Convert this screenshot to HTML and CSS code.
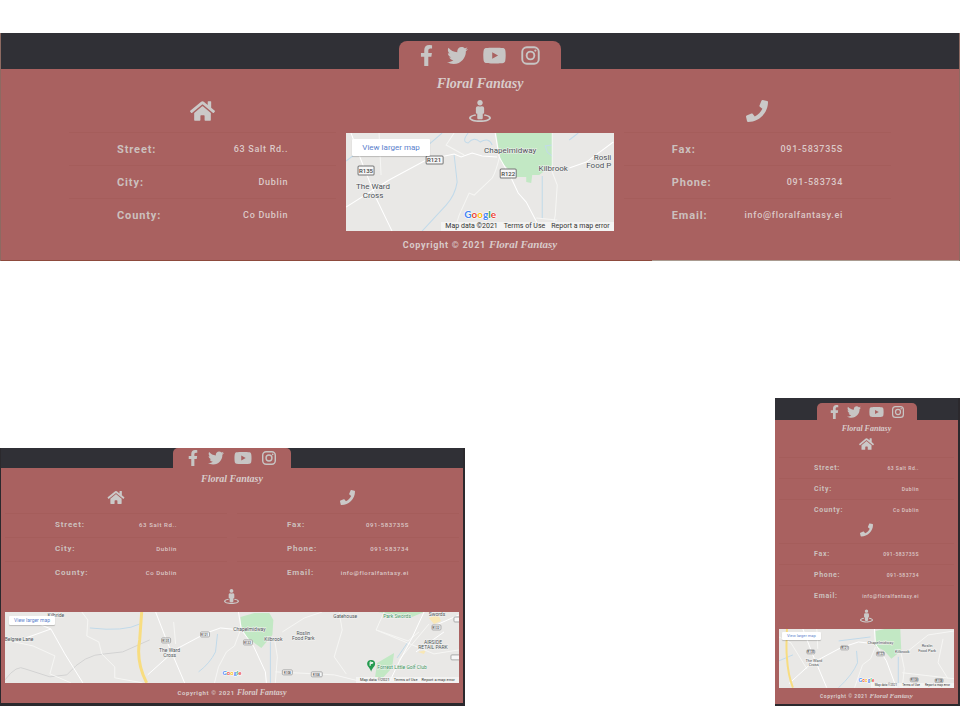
FILE: index.html
```html
<!DOCTYPE html>
<html lang="en">
<head>
<meta charset="utf-8">
<meta name="viewport" content="width=device-width, initial-scale=1">
<title>Floral Fantasy</title>
<link rel="stylesheet" href="styles.css">
</head>
<body>
<svg class="sprite" aria-hidden="true">
  <symbol id="facebook" viewBox="0 0 320 512"><path d="M279.14 288l14.22-92.66h-88.91v-60.13c0-25.35 12.42-50.06 52.24-50.06h40.42V6.26S260.43 0 225.36 0c-73.22 0-121.08 44.38-121.08 124.72v70.62H22.89V288h81.39v224h100.17V288z"/></symbol>
  <symbol id="twitter" viewBox="0 0 512 512"><path d="M459.37 151.716c.325 4.548.325 9.097.325 13.645 0 138.72-105.583 298.558-298.558 298.558-59.452 0-114.68-17.219-161.137-47.106 8.447.974 16.568 1.299 25.34 1.299 49.055 0 94.213-16.568 130.274-44.832-46.132-.975-84.792-31.188-98.112-72.772 6.498.974 12.995 1.624 19.818 1.624 9.421 0 18.843-1.3 27.614-3.573-48.081-9.747-84.143-51.98-84.143-102.985v-1.299c13.969 7.797 30.214 12.67 47.431 13.319-28.264-18.843-46.781-51.005-46.781-87.391 0-19.492 5.197-37.36 14.294-52.954 51.655 63.675 129.3 105.258 216.365 109.807-1.624-7.797-2.599-15.918-2.599-24.04 0-57.828 46.782-104.934 104.934-104.934 30.213 0 57.502 12.67 76.67 33.137 23.715-4.548 46.456-13.32 66.599-25.34-7.798 24.366-24.366 44.833-46.132 57.827 21.117-2.273 41.584-8.122 60.426-16.243-14.292 20.791-32.161 39.308-52.628 54.253z"/></symbol>
  <symbol id="youtube" viewBox="0 0 576 512"><path d="M549.655 124.083c-6.281-23.65-24.787-42.276-48.284-48.597C458.781 64 288 64 288 64S117.22 64 74.629 75.486c-23.497 6.322-42.003 24.947-48.284 48.597-11.412 42.867-11.412 132.305-11.412 132.305s0 89.438 11.412 132.305c6.281 23.65 24.787 41.5 48.284 47.821C117.22 448 288 448 288 448s170.78 0 213.371-11.486c23.497-6.321 42.003-24.171 48.284-47.821 11.412-42.867 11.412-132.305 11.412-132.305s0-89.438-11.412-132.305zm-317.51 213.508V175.185l142.739 81.205-142.739 81.201z"/></symbol>
  <symbol id="instagram" viewBox="0 0 448 512"><rect x="23" y="55" width="402" height="402" rx="110" fill="none" stroke="currentColor" stroke-width="46"/><circle cx="224" cy="256" r="94" fill="none" stroke="currentColor" stroke-width="46"/><circle cx="343" cy="137" r="27"/></symbol>
  <symbol id="home" viewBox="0 0 576 512"><path d="M280.37 148.26L96 300.11V464a16 16 0 0 0 16 16l112.06-.29a16 16 0 0 0 15.92-16V368a16 16 0 0 1 16-16h64a16 16 0 0 1 16 16v95.64a16 16 0 0 0 16 16.05L464 480a16 16 0 0 0 16-16V300L295.67 148.26a12.19 12.19 0 0 0-15.3 0zM571.6 251.47L488 182.56V44.05a12 12 0 0 0-12-12h-56a12 12 0 0 0-12 12v72.61L318.47 43a48 48 0 0 0-61 0L4.34 251.47a12 12 0 0 0-1.6 16.9l25.5 31A12 12 0 0 0 45.15 301l235.22-193.74a12.19 12.19 0 0 1 15.3 0L530.9 301a12 12 0 0 0 16.9-1.6l25.5-31a12 12 0 0 0-1.7-16.93z"/></symbol>
  <symbol id="phone" viewBox="0 0 512 512"><path d="M493.4 24.6l-104-24c-11.3-2.6-22.9 3.3-27.5 13.9l-48 112c-4.2 9.8-1.4 21.3 6.9 28l60.6 49.6c-36 76.7-98.9 140.5-177.2 177.2l-49.6-60.6c-6.8-8.3-18.2-11.1-28-6.9l-112 48C3.9 366.5-2 378.1.6 389.4l24 104C27.1 504.2 36.7 512 48 512c256.1 0 464-207.5 464-464 0-11.2-7.7-20.9-18.6-23.4z"/></symbol>
  <symbol id="street-view" viewBox="0 0 512 512"><path d="M367.9 329.76c-4.62 5.3-9.78 10.1-15.9 13.65v22.94c66.52 9.34 112 28.05 112 49.65 0 30.93-93.12 56-208 56S48 446.93 48 416c0-21.6 45.48-40.3 112-49.65v-22.94c-6.12-3.55-11.28-8.35-15.9-13.65C58.87 345.34 0 378.05 0 416c0 53.02 114.62 96 256 96s256-42.98 256-96c0-37.95-58.87-70.66-144.1-86.24zM256 128c35.35 0 64-28.65 64-64S291.35 0 256 0s-64 28.65-64 64 28.65 64 64 64zm-64 192v96c0 17.67 14.33 32 32 32h64c17.67 0 32-14.33 32-32v-96c17.67 0 32-14.33 32-32v-96c0-26.51-21.49-48-48-48h-11.8c-11.07 5.03-23.26 8-36.2 8s-25.13-2.97-36.2-8H208c-26.51 0-48 21.49-48 48v96c0 17.67 14.33 32 32 32z"/></symbol>
</svg>

<footer class="footer footer-wide">
  <div class="bar">
    <nav class="social" aria-label="Social media">
      <a href="#" aria-label="Facebook"><svg class="narrow"><use href="#facebook"/></svg></a>
      <a href="#" aria-label="Twitter"><svg><use href="#twitter"/></svg></a>
      <a href="#" aria-label="YouTube"><svg class="broad"><use href="#youtube"/></svg></a>
      <a href="#" aria-label="Instagram"><svg class="square"><use href="#instagram"/></svg></a>
    </nav>
  </div>
  <p class="brand script">Floral Fantasy</p>
  <div class="columns">
    <section class="address">
      <svg class="icon home"><use href="#home"/></svg>
      <table>
        <tr><th scope="row">Street:</th><td>63 Salt Rd..</td></tr>
        <tr><th scope="row">City:</th><td>Dublin</td></tr>
        <tr><th scope="row">County:</th><td>Co Dublin</td></tr>
      </table>
    </section>
    <section class="location">
      <svg class="icon"><use href="#street-view"/></svg>
      <div class="map">
        <svg class="map-art" viewBox="0 0 267 98">
          <path class="park" d="M150 0H206V32L193 42H186L185 50L180 49V44L170 44L155 29L153 19Z"/>
          <path class="water" d="M122 0Q115 9 122 10Q128 3 134 9Q143 4 146 12M108 22L111 49Q109 62 100 72L76 98M0 28L8 22M82 12L96 0M206 12L199 13L201 19L206 23M196 43V86M223 7L232 0"/>
          <path class="lane" d="M33 0L35 42M108 0L100 12L118 22M153 25Q150 38 146 45L128 62L123 60L113 82L108 98M206 39L211 52L209 82L206 98M190 85L211 87M206 0V39"/>
          <path class="road" d="M0 74L43 47L80 27L108 21L115 24L126 20L136 23L151 24M149 0L153 24L165 45L172 60L180 69L192 92M5 0L15 27L30 65L46 98M223 35L240 29L267 9"/>
          <g class="shield"><rect x="80" y="23" width="17" height="8" rx="1"/><rect x="12" y="33" width="16" height="9" rx="1"/><rect x="154" y="36" width="16" height="9" rx="1"/></g>
          <g class="shield-text"><text x="88" y="29">R121</text><text x="20" y="40">R135</text><text x="162" y="43">R122</text></g>
          <g class="place"><text x="164" y="20">Chapelmidway</text><text x="207" y="38">Kilbrook</text><text x="27" y="56">The Ward</text><text x="27" y="65">Cross</text></g>
          <g class="place place-edge"><text x="265" y="27">Rosli</text><text x="265" y="35">Food P</text></g>
          <text class="logo" x="118" y="85"><tspan class="g-blue">G</tspan><tspan class="g-red">o</tspan><tspan class="g-yellow">o</tspan><tspan class="g-blue">g</tspan><tspan class="g-green">l</tspan><tspan class="g-red">e</tspan></text>
        </svg>
        <a class="larger" href="#">View larger map</a>
        <div class="legal"><span>Map data ©2021</span><a href="#">Terms of Use</a><a href="#">Report a map error</a></div>
      </div>
    </section>
    <section class="contact">
      <svg class="icon"><use href="#phone"/></svg>
      <table>
        <tr><th scope="row">Fax:</th><td>091-583735S</td></tr>
        <tr><th scope="row">Phone:</th><td>091-583734</td></tr>
        <tr><th scope="row">Email:</th><td>info@floralfantasy.ei</td></tr>
      </table>
    </section>
  </div>
  <p class="copyright">Copyright © 2021 <span class="script">Floral Fantasy</span></p>
</footer>

<div class="previews">
  <footer class="footer footer-tablet">
    <div class="bar">
      <nav class="social" aria-label="Social media">
        <a href="#" aria-label="Facebook"><svg class="narrow"><use href="#facebook"/></svg></a>
        <a href="#" aria-label="Twitter"><svg><use href="#twitter"/></svg></a>
        <a href="#" aria-label="YouTube"><svg class="broad"><use href="#youtube"/></svg></a>
        <a href="#" aria-label="Instagram"><svg class="square"><use href="#instagram"/></svg></a>
      </nav>
    </div>
    <p class="brand script">Floral Fantasy</p>
    <div class="columns">
      <section class="address">
        <svg class="icon home"><use href="#home"/></svg>
        <table>
          <tr><th scope="row">Street:</th><td>63 Salt Rd..</td></tr>
          <tr><th scope="row">City:</th><td>Dublin</td></tr>
          <tr><th scope="row">County:</th><td>Co Dublin</td></tr>
        </table>
      </section>
      <section class="contact">
        <svg class="icon"><use href="#phone"/></svg>
        <table>
          <tr><th scope="row">Fax:</th><td>091-583735S</td></tr>
          <tr><th scope="row">Phone:</th><td>091-583734</td></tr>
          <tr><th scope="row">Email:</th><td>info@floralfantasy.ei</td></tr>
        </table>
      </section>
      <section class="location">
        <svg class="icon"><use href="#street-view"/></svg>
        <div class="map">
          <svg class="map-art" viewBox="0 0 455 71">
            <path class="park" d="M236 5L250 1H265L269 8L268 23L257 36L243 26L237 15ZM373 51L390 41L388 56L378 67L371 65ZM374 0H420L408 5L390 3Z"/>
            <path class="town" d="M425 6L434 2L437 9L430 12ZM414 40L422 38L420 42Z"/>
            <path class="boundary" d="M0 68Q12 52 20 57L45 65L62 63Q80 42 100 42L118 40L145 28"/>
            <path class="water" d="M85 16Q120 20 135 12M213 22L211 40Q205 52 194 60M266 28V71M393 46L404 30"/>
            <path class="lane" d="M77 0L83 8L82 24L94 30L97 42L110 55V66L138 71M0 28L28 34L50 44L45 62L66 71M169 10L171 32M236 18L230 34L222 40L214 55L210 71M270 26L273 45L271 71M271 60L330 63L362 71M278 20L300 6L318 0M335 0L338 18L330 45L342 62M372 18L404 29L415 20M380 0L372 18L430 42L455 38M395 48L425 12"/>
            <path class="road" d="M24 8L46 17L60 42L78 71M46 17L21 26M143 63L172 37L202 21L216 16L236 18M151 0L163 31L180 71M234 0L237 18L249 34L261 60L262 71M420 0L408 26L395 50L385 71M430 14L455 3M412 40L440 20"/>
            <path class="highway" d="M137 0L135 28Q131 50 142 71"/>
            <g class="shield"><rect x="157" y="26" width="9" height="5" rx="1"/><rect x="196" y="20" width="9" height="5" rx="1"/><rect x="239" y="28" width="9" height="5" rx="1"/><rect x="278" y="58" width="10" height="5" rx="1"/><rect x="307" y="60" width="11" height="5" rx="1"/><rect x="428" y="13" width="9" height="5" rx="1"/><rect x="450" y="5" width="9" height="5" rx="1"/><rect x="447" y="43" width="9" height="5" rx="1"/></g>
            <g class="shield-text"><text x="161" y="30">R135</text><text x="200" y="24">R121</text><text x="243" y="32">R122</text><text x="283" y="62">R108</text><text x="312" y="64">R108</text><text x="432" y="17">R132</text></g>
            <g class="place"><text x="51" y="5">Kilbride</text><text x="14" y="29">Belgree Lane</text><text x="165" y="40">The Ward</text><text x="165" y="45">Cross</text><text x="245" y="19">Chapelmidway</text><text x="269" y="29">Kilbrook</text><text x="299" y="23">Roslin</text><text x="299" y="28">Food Park</text><text x="341" y="6">Gatehouse</text><text x="433" y="4">Swords</text><text x="429" y="32">AIRSIDE</text><text x="429" y="37">RETAIL PARK</text></g>
            <g class="place leisure"><text x="393" y="6">Park Swords</text><text x="398" y="57">Forrest Little Golf Club</text></g>
            <path class="pin" d="M367 60C366 56 363 55 363 52A4 4 0 0 1 371 52C371 55 368 56 367 60Z"/>
            <path class="pin-mark" d="M366 54V50L369 51L366 52"/>
            <text class="logo" x="218" y="63"><tspan class="g-blue">G</tspan><tspan class="g-red">o</tspan><tspan class="g-yellow">o</tspan><tspan class="g-blue">g</tspan><tspan class="g-green">l</tspan><tspan class="g-red">e</tspan></text>
          </svg>
          <a class="larger" href="#">View larger map</a>
          <div class="legal"><span>Map data ©2021</span><a href="#">Terms of Use</a><a href="#">Report a map error</a></div>
        </div>
      </section>
    </div>
    <p class="copyright">Copyright © 2021 <span class="script">Floral Fantasy</span></p>
  </footer>

  <footer class="footer footer-phone">
    <div class="bar">
      <nav class="social" aria-label="Social media">
        <a href="#" aria-label="Facebook"><svg class="narrow"><use href="#facebook"/></svg></a>
        <a href="#" aria-label="Twitter"><svg><use href="#twitter"/></svg></a>
        <a href="#" aria-label="YouTube"><svg class="broad"><use href="#youtube"/></svg></a>
        <a href="#" aria-label="Instagram"><svg class="square"><use href="#instagram"/></svg></a>
      </nav>
    </div>
    <p class="brand script">Floral Fantasy</p>
    <div class="columns">
      <section class="address">
        <svg class="icon home"><use href="#home"/></svg>
        <table>
          <tr><th scope="row">Street:</th><td>63 Salt Rd..</td></tr>
          <tr><th scope="row">City:</th><td>Dublin</td></tr>
          <tr><th scope="row">County:</th><td>Co Dublin</td></tr>
        </table>
      </section>
      <section class="contact">
        <svg class="icon"><use href="#phone"/></svg>
        <table>
          <tr><th scope="row">Fax:</th><td>091-583735S</td></tr>
          <tr><th scope="row">Phone:</th><td>091-583734</td></tr>
          <tr><th scope="row">Email:</th><td>info@floralfantasy.ei</td></tr>
        </table>
      </section>
      <section class="location">
        <svg class="icon"><use href="#street-view"/></svg>
        <div class="map">
          <svg class="map-art" viewBox="0 0 176 59">
            <path class="park" d="M97 2L106 0H122L123 22L113 30L106 22L97 17Z"/>
            <path class="water" d="M0 32L14 26M78 22L79 34Q74 46 60 59M60 12L92 8M120 28V59"/>
            <path class="lane" d="M38 0L39 20M97 18L92 30L84 36L76 59M123 25L126 40L124 59M0 8L12 14L28 40M124 44L176 50M130 22L150 6L176 2M165 10L160 34L170 50"/>
            <path class="road" d="M10 55L32 35L62 19L80 13L97 15M24 0L34 26L48 59M96 0L97 15L108 32L118 59"/>
            <path class="highway" d="M8 0Q7 20 8 29Q9 46 14 59"/>
            <g class="shield"><rect x="28" y="21" width="8" height="4" rx="1"/><rect x="62" y="17" width="8" height="4" rx="1"/><rect x="98" y="23" width="8" height="4" rx="1"/><rect x="132" y="49" width="8" height="4" rx="1"/><rect x="157" y="50" width="8" height="4" rx="1"/></g>
            <g class="shield-text"><text x="32" y="24">R135</text><text x="66" y="20">R121</text><text x="102" y="26">R122</text><text x="136" y="52">R108</text><text x="161" y="53">R108</text></g>
            <g class="place"><text x="102" y="15">Chapelmidway</text><text x="124" y="24">Kilbrook</text><text x="35" y="33">The Ward</text><text x="35" y="37">Cross</text><text x="149" y="18">Roslin</text><text x="149" y="23">Food Park</text></g>
            <text class="logo" x="80" y="53"><tspan class="g-blue">G</tspan><tspan class="g-red">o</tspan><tspan class="g-yellow">o</tspan><tspan class="g-blue">g</tspan><tspan class="g-green">l</tspan><tspan class="g-red">e</tspan></text>
          </svg>
          <a class="larger" href="#">View larger map</a>
          <div class="legal"><span>Map data ©2021</span><a href="#">Terms of Use</a><a href="#">Report a map error</a></div>
        </div>
      </section>
    </div>
    <p class="copyright">Copyright © 2021 <span class="script">Floral Fantasy</span></p>
  </footer>
</div>
</body>
</html>
```
FILE: styles.css
```css
* { box-sizing: border-box; }

body {
  margin: 0;
  padding-top: 33px;
  background: #fff;
  font-family: Roboto, "Liberation Sans", sans-serif;
}

p { margin: 0; }
a { color: inherit; text-decoration: none; }
.sprite { display: none; }

.footer {
  --tracking: 0.1em;
  background: #a96160;
  color: #d3c3c1;
}

.footer-wide {
  --tracking: 0.08em;
  --bar: 36px;
  --tab-h: 28px;
  --tab-pad: 21px;
  --tab-gap: 14px;
  --radius: 8px;
  --social: 21px;
  --social-broad: 25px;
  --social-narrow: 13px;
  --social-square: 19px;
  --brand-h: 30px;
  --brand-size: 14px;
  --icon: 22px;
  --icon-home: 25px;
  --icon-h: 24px;
  --icon-gap: 9px;
  --row: 33px;
  --label: 11px;
  --value: 9px;
  --cell: 48px;
  --copy-h: 29px;
  --copy-size: 9px;
  --script-size: 11px;
  --place: 8px;
  --shield: 6px;
  --logo: 10px;
  --larger: 8px;
  --larger-pad: 4px 10px;
  --larger-in: 6px;
  --legal: 7px;
  --legal-gap: 6px;
  border: solid #8d6a62;
  border-width: 0 1px;
}

.footer-wide::after {
  content: "";
  display: block;
  height: 1px;
  background: linear-gradient(to right, #8d4a3d 68%, #a99b90 68%);
}

.footer-tablet {
  --bar: 20px;
  --tab-h: 20px;
  --tab-pad: 15px;
  --tab-gap: 10px;
  --radius: 5px;
  --social: 16px;
  --social-broad: 18px;
  --social-narrow: 10px;
  --social-square: 14px;
  --brand-h: 22px;
  --brand-size: 10px;
  --icon: 15px;
  --icon-home: 18px;
  --icon-h: 15px;
  --icon-gap: 8px;
  --row: 24px;
  --label: 8px;
  --value: 6px;
  --cell: 50px;
  --copy-h: 20px;
  --copy-size: 6px;
  --script-size: 8px;
  --place: 5px;
  --shield: 3px;
  --logo: 6px;
  --larger: 5px;
  --larger-pad: 2px 5px;
  --larger-in: 4px;
  --legal: 4px;
  --legal-gap: 4px;
  border: solid #2b292d;
  border-width: 0 2px 3px 1px;
}

.footer-phone {
  --bar: 22px;
  --tab-h: 17px;
  --tab-pad: 13px;
  --tab-gap: 8px;
  --radius: 5px;
  --social: 14px;
  --social-broad: 15px;
  --social-narrow: 9px;
  --social-square: 12px;
  --brand-h: 17px;
  --brand-size: 8px;
  --icon: 13px;
  --icon-home: 15px;
  --icon-h: 14px;
  --icon-gap: 6px;
  --row: 21px;
  --label: 7px;
  --value: 5px;
  --cell: 35px;
  --copy-h: 16px;
  --copy-size: 5px;
  --script-size: 7px;
  --place: 4px;
  --shield: 3px;
  --logo: 5px;
  --larger: 4px;
  --larger-pad: 2px 5px;
  --larger-in: 3px;
  --legal: 3px;
  --legal-gap: 5px;
  border: solid #2b292d;
  border-width: 0 2px 2px 0;
}

.bar {
  display: flex;
  justify-content: center;
  align-items: flex-end;
  height: var(--bar);
  background: #303036;
}

.social {
  display: flex;
  align-items: center;
  gap: var(--tab-gap);
  height: var(--tab-h);
  padding: 0 var(--tab-pad);
  border-radius: var(--radius) var(--radius) 0 0;
  background: #a96160;
  color: #c7c5c4;
}

.social svg {
  display: block;
  width: var(--social);
  height: var(--social);
  fill: currentColor;
}
.social svg.broad { width: var(--social-broad); }
.social svg.narrow { width: var(--social-narrow); }
.social svg.square { width: var(--social-square); }

.script {
  font-family: Yellowtail, "Liberation Serif", serif;
  font-style: italic;
  font-weight: 700;
  letter-spacing: 0;
}

.brand {
  height: var(--brand-h);
  color: #d8cccb;
  font-size: var(--brand-size);
  line-height: var(--brand-h);
  text-align: center;
}

.columns { display: grid; }

.footer-wide .columns {
  grid-template-columns: repeat(3, 1fr);
  gap: 10px;
  padding: 0 68px;
}

.footer-tablet .columns {
  grid-template-columns: repeat(2, 1fr);
  gap: 4px 10px;
  padding: 0 4px;
}
.footer-tablet .location { grid-column: 1 / -1; }

.footer-phone .columns {
  row-gap: 3px;
  padding: 0 4px;
}

.icon {
  display: block;
  width: var(--icon);
  height: var(--icon-h);
  margin: 0 auto var(--icon-gap);
  fill: #cbc9c8;
}
.icon.home { width: var(--icon-home); }
.footer-wide .location .icon { margin-bottom: 10px; }

table {
  width: 100%;
  border-collapse: separate;
  border-spacing: 0;
}

th, td {
  height: var(--row);
  padding: 0;
  border-top: 1px solid #a55d5b;
  line-height: 1;
  letter-spacing: var(--tracking);
  white-space: nowrap;
}

th {
  padding-left: var(--cell);
  color: #ccc0be;
  font-size: var(--label);
  font-weight: 700;
  text-align: left;
}

td {
  padding-right: var(--cell);
  color: #dcc9c8;
  font-size: var(--value);
  font-weight: 500;
  text-align: right;
}

.map {
  position: relative;
  overflow: hidden;
  background: #e9e8e6;
}

.map-art {
  display: block;
  width: 100%;
  height: auto;
}

.park { fill: #c2e8c4; }
.town { fill: #f8e7b5; }
.water { fill: none; stroke: #c1daea; stroke-width: 1; }
.boundary { fill: none; stroke: #d3d3d3; stroke-width: 1; }
.lane { fill: none; stroke: #f6f6f4; stroke-width: 1; }
.road { fill: none; stroke: #fff; stroke-width: 1; }
.highway { fill: none; stroke: #f8dd80; stroke-width: 3; }
.footer-phone .highway { stroke-width: 2; }
.shield { fill: #f7f7f7; stroke: #777; stroke-width: 1; }
.footer-tablet .shield, .footer-phone .shield { stroke: #aaa; }

.shield-text {
  fill: #444;
  font-size: var(--shield);
  font-weight: 500;
  text-anchor: middle;
}

.place {
  fill: #4c5157;
  stroke: #f4f4f2;
  stroke-width: 1;
  paint-order: stroke;
  font-size: var(--place);
  text-anchor: middle;
}
.place-edge { text-anchor: end; }
.leisure { fill: #3b9460; }
.pin { fill: #259b50; }
.pin-mark { fill: none; stroke: #fff; stroke-width: 1; }

.logo {
  stroke: #fff;
  stroke-width: 1;
  paint-order: stroke;
  font-family: Lato, sans-serif;
  font-size: var(--logo);
  font-weight: 700;
}
.g-blue { fill: #4285f4; }
.g-red { fill: #ea4335; }
.g-yellow { fill: #fbbc05; }
.g-green { fill: #34a853; }

.larger {
  position: absolute;
  top: var(--larger-in);
  left: var(--larger-in);
  padding: var(--larger-pad);
  border-radius: 1px;
  background: #fff;
  box-shadow: 0 1px 1px rgba(0, 0, 0, 0.2);
  color: #5a80cc;
  font-size: var(--larger);
  line-height: 1;
}
.footer-wide .larger { line-height: 9px; }

.legal {
  position: absolute;
  right: 0;
  bottom: 0;
  display: flex;
  gap: var(--legal-gap);
  padding: 1px 4px;
  background: rgba(245, 245, 245, 0.8);
  color: #333;
  font-size: var(--legal);
  line-height: 1;
  white-space: nowrap;
}

.copyright {
  height: var(--copy-h);
  color: #d9cbca;
  font-size: var(--copy-size);
  font-weight: 700;
  line-height: var(--copy-h);
  letter-spacing: var(--tracking);
  text-align: center;
}
.copyright .script {
  font-size: var(--script-size);
  line-height: 1;
}

.previews {
  display: grid;
  grid-template-columns: 465fr 185fr;
  column-gap: 32.3%;
  align-items: end;
  margin-top: 137px;
}
```
